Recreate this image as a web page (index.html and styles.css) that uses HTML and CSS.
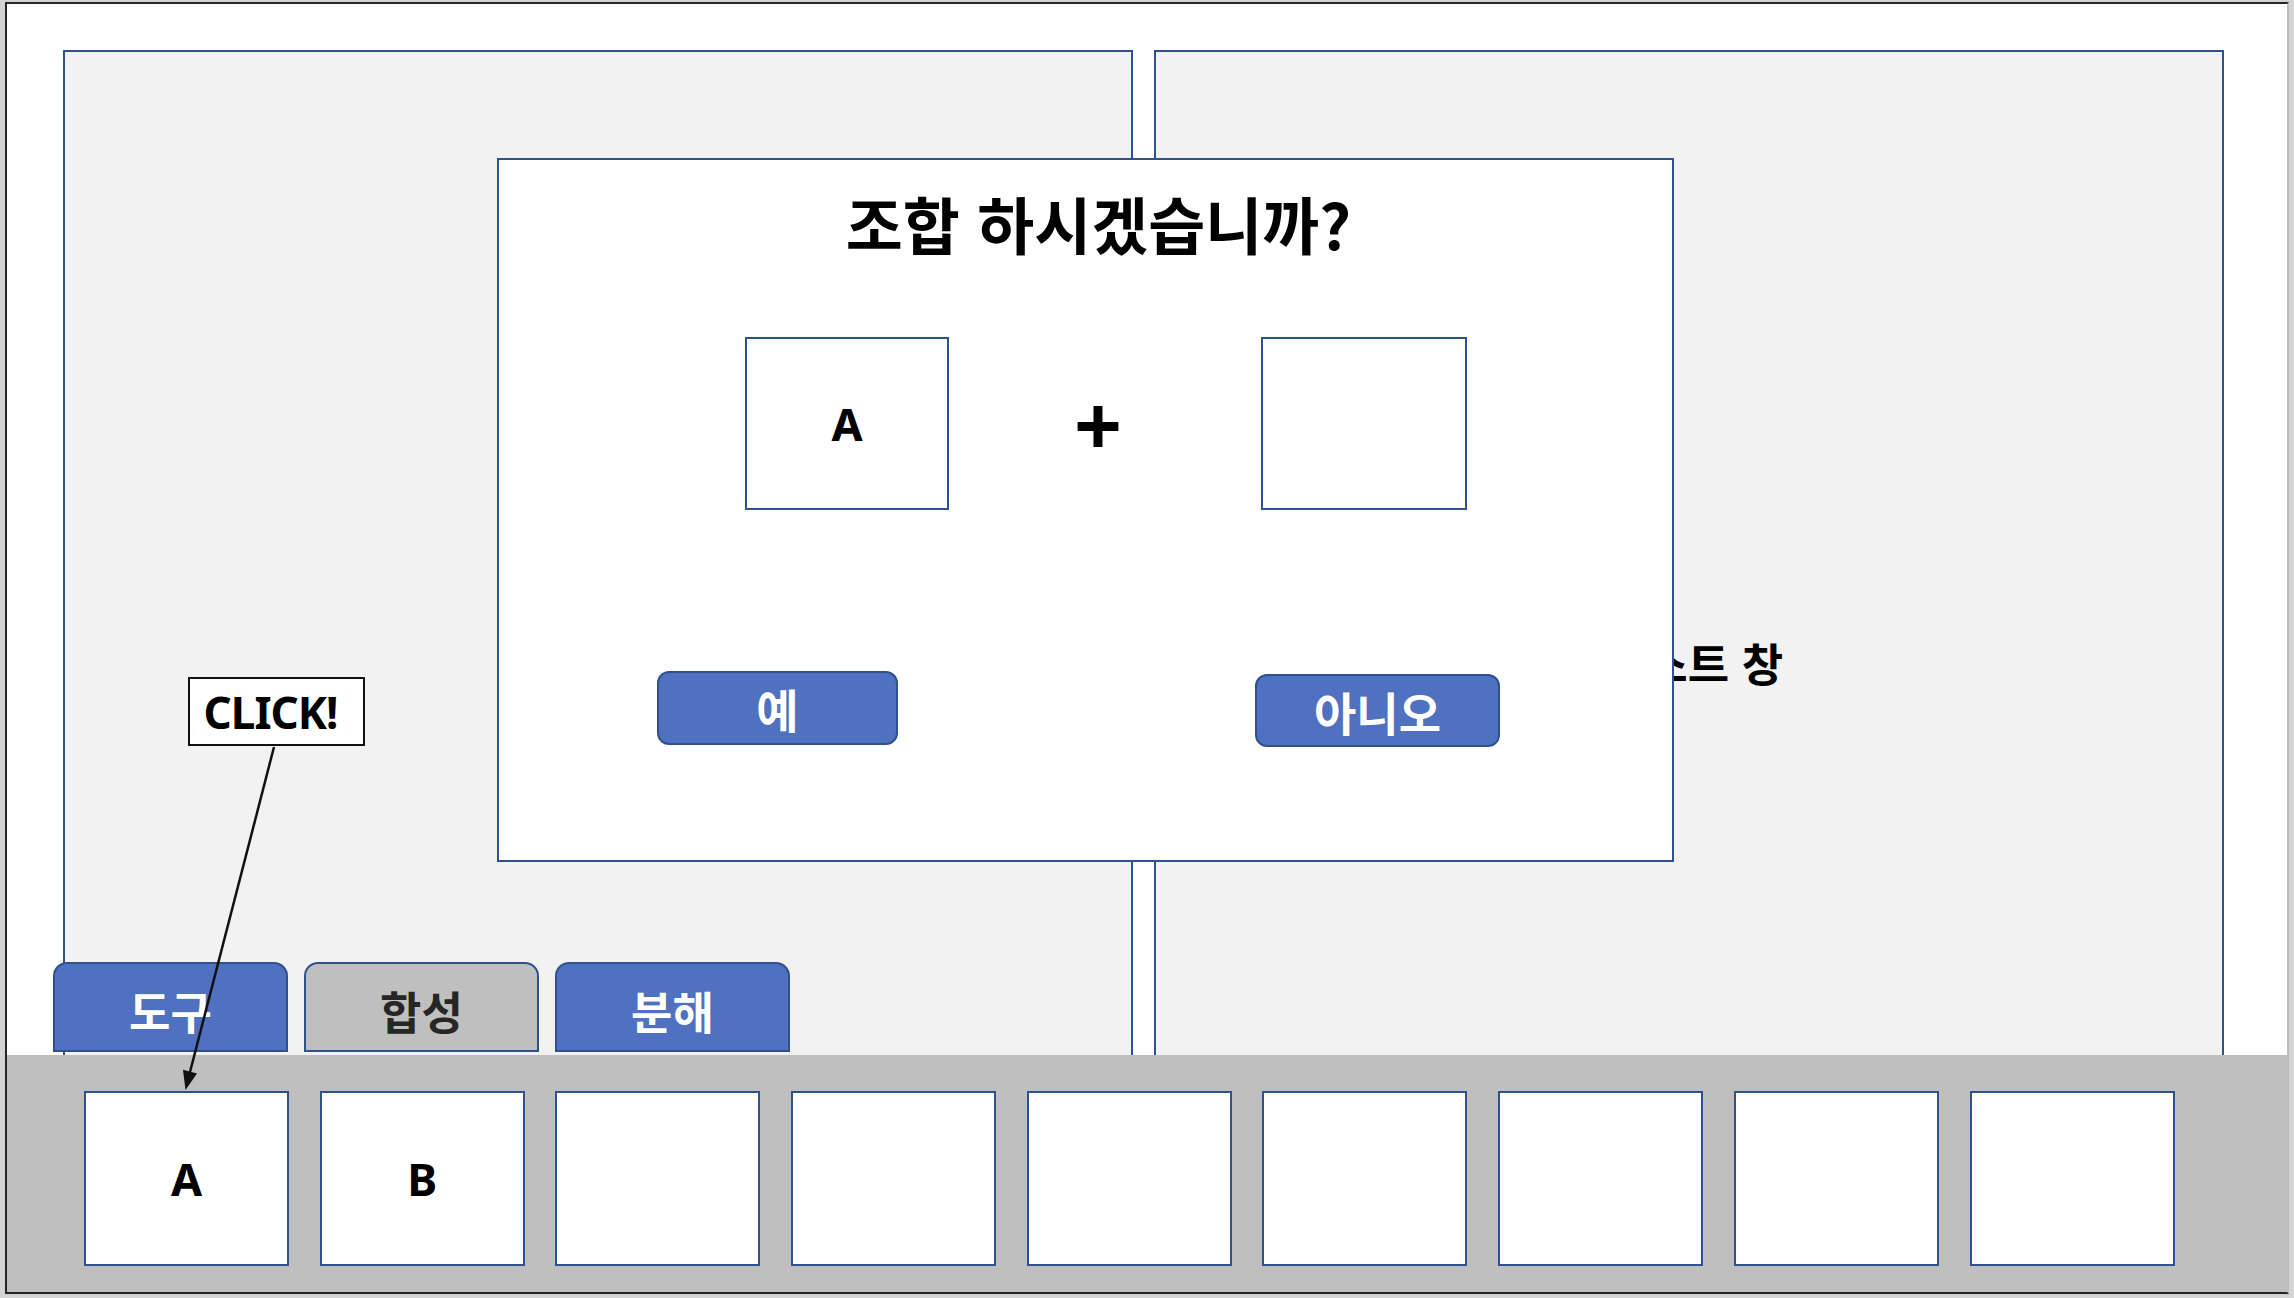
FILE: index.html
```html
<!DOCTYPE html>
<html lang="ko">
    <head>
        <meta charset="UTF-8" />
        <title>조합 화면</title>
        <link rel="stylesheet" href="styles.css">
    </head>

    <body>
        <div class="slide">
            <div class="workspace">
                <section class="panel panel-left">
                    <nav class="tabs">
                        <div class="tab tab-blue">도구</div>
                        <div class="tab tab-gray">합성</div>
                        <div class="tab tab-blue">분해</div>
                    </nav>
                </section>
                <section class="panel panel-right">
                    <p class="panel-title">리스트 창</p>
                </section>
            </div>

            <div class="inventory">
                <div class="slot">A</div>
                <div class="slot">B</div>
                <div class="slot"></div>
                <div class="slot"></div>
                <div class="slot"></div>
                <div class="slot"></div>
                <div class="slot"></div>
                <div class="slot"></div>
                <div class="slot"></div>
            </div>

            <!-- 조합 확인 창 -->
            <div class="dialog">
                <h1 class="dialog-title">조합 하시겠습니까?</h1>
                <div class="combo">
                    <div class="combo-box combo-first">A</div>
                    <div class="combo-plus">+</div>
                    <div class="combo-box combo-second"></div>
                </div>
                <div class="dialog-buttons">
                    <button type="button" class="button button-yes">예</button>
                    <button type="button" class="button button-no">아니오</button>
                </div>
            </div>

            <svg class="pointer" width="2280" height="1288" viewBox="0 0 2280 1288">
                <line x1="267" y1="743" x2="183" y2="1068" stroke="#111" stroke-width="2.5" />
                <polygon points="178.5,1086 190,1069.5 176,1065.8" fill="#111" />
            </svg>
            <div class="note">CLICK!</div>
        </div>
    </body>
</html>
```

FILE: styles.css
```css
body {
    margin: 0;
    background-color: #d4d4d4;
    font-family: "Noto Sans CJK KR", "Noto Sans", sans-serif;
}

.slide {
    position: relative;
    margin: 2px 0 0 5px;
    width: 2284px;
    height: 1292px;
    box-sizing: border-box;
    border: 2px solid #262626;
    border-right-color: #bdbdbd;
    background-color: #fff;
    display: flex;
    flex-direction: column;
}

.workspace {
    flex: 1;
    display: flex;
    gap: 21px;
    padding: 46px 0 0 56px;
}

.panel {
    box-sizing: border-box;
    background-color: #f2f2f2;
    border: 2px solid #2f528f;
    border-bottom: none;
}

.panel-left {
    width: 1070px;
    display: flex;
    flex-direction: column;
    justify-content: flex-end;
}

.panel-right {
    width: 1070px;
}

.panel-title {
    margin: 0;
    padding: 588px 0 0 10px;
    text-align: center;
    font-size: 45px;
    font-weight: 700;
    line-height: 1;
    color: #000;
}

.tabs {
    display: flex;
    gap: 16px;
    margin: 0 0 3px -12px;
}

.tab {
    width: 235px;
    height: 90px;
    box-sizing: border-box;
    border: 2px solid #2f528f;
    border-radius: 14px 14px 0 0;
    display: flex;
    align-items: center;
    justify-content: center;
    font-size: 45px;
    font-weight: 700;
    padding-top: 6px;
}

.tab-blue {
    background-color: #4f71bf;
    color: #fff;
}

.tab-gray {
    background-color: #bfbfbf;
    color: #262626;
}

.inventory {
    flex: none;
    height: 237px;
    box-sizing: border-box;
    background-color: #bfbfbf;
    display: flex;
    gap: 30.7px;
    padding: 36px 0 0 77px;
}

.slot,
.combo-box {
    box-sizing: border-box;
    background-color: #fff;
    border: 2px solid #2f528f;
    display: flex;
    align-items: center;
    justify-content: center;
    font-family: "Noto Sans", sans-serif;
    font-size: 45px;
    font-weight: 700;
    color: #000;
}

.slot {
    width: 205px;
    height: 175px;
}

.dialog {
    position: absolute;
    left: 490px;
    top: 154px;
    width: 1177px;
    height: 704px;
    box-sizing: border-box;
    border: 2px solid #2f528f;
    background-color: #fff;
}

.dialog-title {
    margin: 0;
    padding: 32px 0 0 26px;
    text-align: center;
    font-size: 62px;
    font-weight: 700;
    line-height: 1;
    color: #000;
}

.combo {
    display: flex;
    align-items: center;
    margin-top: 83px;
    padding-left: 246px;
}

.combo-box {
    height: 173px;
}

.combo-first {
    width: 204px;
}

.combo-second {
    width: 206px;
}

.combo-plus {
    width: 312px;
    box-sizing: border-box;
    padding-right: 14px;
    text-align: center;
    font-family: "Noto Sans", sans-serif;
    font-size: 84px;
    font-weight: 700;
    line-height: 1;
    color: #000;
}

.dialog-buttons {
    display: flex;
    align-items: flex-start;
    gap: 357px;
    margin-top: 161px;
    padding-left: 158px;
}

.button {
    box-sizing: border-box;
    background-color: #4f71bf;
    border: 2px solid #2f528f;
    border-radius: 12px;
    color: #fff;
    font-family: "Noto Sans CJK KR", sans-serif;
    font-size: 46px;
    font-weight: 700;
    line-height: 1;
    display: flex;
    align-items: center;
    justify-content: center;
    padding: 0;
}

.button-yes {
    width: 241px;
    height: 74px;
}

.button-no {
    width: 245px;
    height: 73px;
    margin-top: 3px;
}

.pointer {
    position: absolute;
    left: 0;
    top: 0;
    pointer-events: none;
}

.note {
    position: absolute;
    left: 181px;
    top: 673px;
    width: 177px;
    height: 69px;
    box-sizing: border-box;
    border: 2px solid #111;
    background-color: #fff;
    display: flex;
    align-items: center;
    justify-content: center;
    padding-right: 12px;
    font-family: "Noto Sans", sans-serif;
    font-size: 44px;
    font-weight: 700;
    letter-spacing: -1px;
    color: #000;
}
```
